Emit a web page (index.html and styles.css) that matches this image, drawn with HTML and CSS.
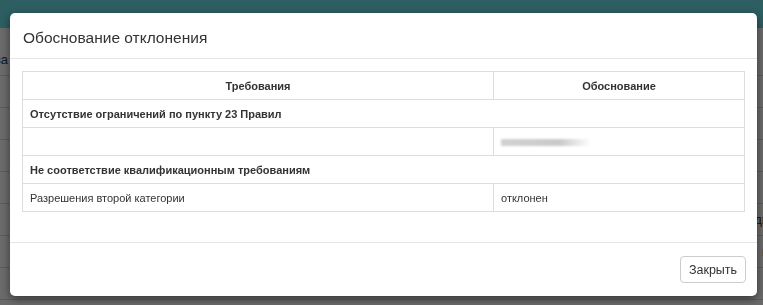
FILE: index.html
```html
<!DOCTYPE html>
<html lang="ru">
<head>
<meta charset="utf-8">
<link rel="stylesheet" href="styles.css">
</head>
<body>
<div class="page">
  <div class="topbar"></div>
  <div class="bg-content">
    <div class="bg-row"><span class="bg-text">ва</span></div>
    <div class="bg-row"></div>
    <div class="bg-row"></div>
    <div class="bg-row"></div>
    <div class="bg-row"></div>
    <div class="bg-row"><span class="bg-text right">ди</span></div>
    <div class="bg-row"><span class="bg-text right">в</span></div>
    <div class="bg-row"></div>
  </div>
</div>
<div class="backdrop"></div>
<div class="modal">
  <div class="modal-header">
    <h4 class="modal-title">Обоснование отклонения</h4>
  </div>
  <div class="modal-body">
    <table class="tbl">
      <thead>
        <tr><th class="col-req">Требования</th><th>Обоснование</th></tr>
      </thead>
      <tbody>
        <tr><td colspan="2" class="group">Отсутствие ограничений по пункту 23 Правил</td></tr>
        <tr><td></td><td><span class="blurred"></span></td></tr>
        <tr><td colspan="2" class="group">Не соответствие квалификационным требованиям</td></tr>
        <tr><td>Разрешения второй категории</td><td>отклонен</td></tr>
      </tbody>
    </table>
  </div>
  <div class="modal-footer">
    <button class="btn">Закрыть</button>
  </div>
</div>
</body>
</html>
```
FILE: styles.css
```css
html, body {
  margin: 0;
  padding: 0;
  width: 763px;
  height: 305px;
  overflow: hidden;
  font-family: "Liberation Sans", Arial, sans-serif;
  color: #333;
}
.page {
  background: #fff;
  height: 305px;
}
.topbar {
  height: 28px;
  background: #6ddfe9;
}
.bg-content {
  padding-top: 16px;
}
.bg-row {
  height: 31px;
  border-bottom: 1px solid #ddd;
  position: relative;
  font-size: 13px;
  line-height: 31px;
}
.bg-text {
  color: #1f3f66;
  margin-left: -6px;
}
.bg-text.right {
  position: absolute;
  right: -6px;
  top: 0;
  color: #333;
}
.backdrop {
  position: fixed;
  inset: 0;
  background: rgba(0, 0, 0, 0.58);
}
.modal {
  position: absolute;
  left: 10px;
  top: 13px;
  width: 747px;
  height: 283px;
  background: #fff;
  border-radius: 5px;
  box-shadow: 0 3px 9px rgba(0, 0, 0, 0.5);
  display: flex;
  flex-direction: column;
}
.modal-header {
  height: 46px;
  box-sizing: border-box;
  padding: 0 13px;
  border-bottom: 1px solid #e5e5e5;
  display: flex;
  align-items: center;
}
.modal-title {
  margin: 0;
  font-size: 15.5px;
  font-weight: normal;
  color: #333;
  padding-top: 4px;
}
.modal-body {
  padding: 12px 12px 0 12px;
  flex: 1;
}
.tbl {
  width: 100%;
  border-collapse: collapse;
  font-size: 11px;
  table-layout: fixed;
}
.tbl th, .tbl td {
  border: 1px solid #ddd;
  height: 28px;
  box-sizing: border-box;
  padding: 0 7px;
  text-align: left;
  vertical-align: middle;
}
.tbl th {
  text-align: center;
  font-weight: bold;
}
.tbl .col-req {
  width: 471px;
}
.tbl td.group {
  font-weight: bold;
}
.blurred {
  display: inline-block;
  width: 90px;
  height: 7px;
  vertical-align: middle;
  background: linear-gradient(90deg, #d2d2d2 0%, #c9c9c9 65%, #ffffff 100%);
  filter: blur(1.2px);
}
.modal-footer {
  border-top: 1px solid #e5e5e5;
  height: 54px;
  box-sizing: border-box;
  padding: 13px 11px 0 0;
  display: flex;
  justify-content: flex-end;
  align-items: flex-start;
}
.btn {
  width: 66px;
  height: 27px;
  background: #fff;
  border: 1px solid #ccc;
  border-radius: 4px;
  font-family: "Liberation Sans", Arial, sans-serif;
  font-size: 12.5px;
  color: #333;
  padding: 0;
}
```
